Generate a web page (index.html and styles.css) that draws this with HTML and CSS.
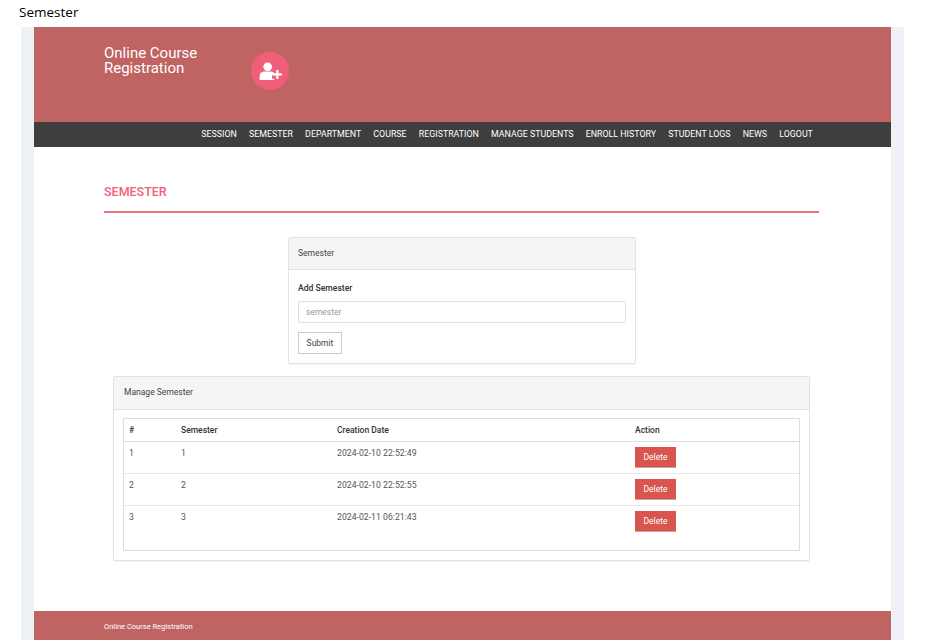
FILE: index.html
```html
<!DOCTYPE html>
<html lang="en">
<head>
<meta charset="utf-8">
<title>Semester</title>
<link rel="stylesheet" href="styles.css">
</head>
<body>
<div class="doc-title">Semester</div>
<div class="gutter">
  <div class="page">
    <header class="masthead">
      <div class="brand">Online Course<br>Registration</div>
      <div class="brand-icon">
        <svg viewBox="0 0 24 20" width="23" height="19" aria-hidden="true">
          <circle cx="9" cy="5" r="4.600" fill="#fff"/>
          <path d="M0.500 19v-3.500C0.500 12 3 10 5.500 10h7c1.600 0 2.800 .8 3.500 2v2h-2.500v3.500H16V19z" fill="#fff"/>
          <path d="M18 8.500h2.400v3.400H24v2.400h-3.600v3.400H18v-3.400h-3.500v-2.400H18z" fill="#fff"/>
        </svg>
      </div>
    </header>
    <nav class="menu">
      <a href="#">SESSION</a>
      <a href="#">SEMESTER</a>
      <a href="#">DEPARTMENT</a>
      <a href="#">COURSE</a>
      <a href="#">REGISTRATION</a>
      <a href="#">MANAGE STUDENTS</a>
      <a href="#">ENROLL HISTORY</a>
      <a href="#">STUDENT LOGS</a>
      <a href="#">NEWS</a>
      <a href="#">LOGOUT</a>
    </nav>
    <main class="content">
      <h1 class="page-title">SEMESTER</h1>
      <section class="panel panel-form">
        <div class="panel-head">Semester</div>
        <form class="panel-body form-body">
          <label class="field-label" for="semester">Add Semester</label>
          <input class="field-input" id="semester" type="text" placeholder="semester">
          <button class="btn-submit" type="button">Submit</button>
        </form>
      </section>
      <section class="panel panel-table">
        <div class="panel-head">Manage Semester</div>
        <div class="panel-body table-body">
          <div class="table-wrap">
            <table class="grid">
              <thead>
                <tr><th class="col-num">#</th><th class="col-sem">Semester</th><th class="col-date">Creation Date</th><th>Action</th></tr>
              </thead>
              <tbody>
                <tr><td>1</td><td>1</td><td>2024-02-10 22:52:49</td><td><button class="btn-delete" type="button">Delete</button></td></tr>
                <tr><td>2</td><td>2</td><td>2024-02-10 22:52:55</td><td><button class="btn-delete" type="button">Delete</button></td></tr>
                <tr><td>3</td><td>3</td><td>2024-02-11 06:21:43</td><td><button class="btn-delete" type="button">Delete</button></td></tr>
              </tbody>
            </table>
          </div>
        </div>
      </section>
    </main>
    <footer class="foot">Online Course Registration</footer>
  </div>
</div>
</body>
</html>
```

FILE: styles.css
```css
* { box-sizing: border-box; }
html, body { margin: 0; padding: 0; height: 640px; overflow: hidden; background: #fff; }
body { font-family: Roboto, "Liberation Sans", sans-serif; color: #555; }

.doc-title {
  height: 27px;
  padding: 4px 0 0 19px;
  font: 13.500px/17px "Open Sans", "Noto Sans", sans-serif;
  color: #000;
}
.gutter {
  width: 883px;
  margin-left: 21px;
  padding: 0 13px;
  height: 613px;
  background: #eef1f5;
}
.page { width: 857px; height: 613px; background: #fff; display: flex; flex-direction: column; }

.masthead {
  height: 95px;
  flex: none;
  background: #bf6363;
  display: flex;
  align-items: flex-start;
  padding: 19px 0 0 70px;
}
.brand { width: 147px; font-size: 15px; line-height: 15px; color: #fff; }
.brand-icon {
  width: 38px;
  height: 38px;
  margin-top: 6px;
  border-radius: 50%;
  background: #ef5f7a;
  display: flex;
  align-items: center;
  justify-content: center;
}

.menu {
  height: 25px;
  flex: none;
  background: #3e3e3e;
  display: flex;
  justify-content: flex-end;
  align-items: center;
  padding-right: 72px;
}
.menu a {
  padding: 0 6.100px;
  font-size: 8.840px;
  line-height: 25px;
  color: #fff;
  text-decoration: none;
  white-space: nowrap;
}

.content { flex: 1; padding: 0 72px 0 70px; }
.page-title {
  margin: 0 0 24px;
  height: 66px;
  padding-top: 37px;
  border-bottom: 2px solid #ef6f86;
  font-size: 12.500px;
  line-height: 16px;
  font-weight: 500;
  color: #ef5f7a;
}
.panel {
  background: #fff;
  border: 1px solid #e3e3e3;
  border-radius: 2px;
  box-shadow: 0 1px 1px rgba(0, 0, 0, .05);
}
.panel-form { width: 348px; height: 127px; margin: 0 0 12px 184px; }
.panel-table { width: 697px; height: 185px; margin-left: 9px; }
.panel-head {
  height: 32px;
  padding-left: 9px;
  background: #f5f5f5;
  border-bottom: 1px solid #e3e3e3;
  font-size: 8.500px;
  line-height: 31px;
  color: #444;
}
.panel-table .panel-head { height: 33px; line-height: 31px; padding-left: 10px; }

.form-body { padding: 12px 9px 0; display: flex; flex-direction: column; align-items: flex-start; }
.field-label { font-size: 8.600px; line-height: 13px; font-weight: 500; color: #333; margin-bottom: 6px; }
.field-input {
  width: 328px;
  height: 22px;
  padding: 0 7px;
  border: 1px solid #e0e0e0;
  border-radius: 2px;
  outline: 0;
  background: #fff;
  font: 8.500px Roboto, sans-serif;
  color: #555;
}
.field-input::placeholder { color: #999; opacity: 1; }
.btn-submit {
  height: 22px;
  width: 44px;
  margin-top: 9px;
  padding: 0;
  background: #fff;
  border: 1px solid #ccc;
  font: 8.500px Roboto, sans-serif;
  color: #444;
}

.table-body { padding: 8px 9px; }
.table-wrap { height: 133px; border: 1px solid #ddd; }
.grid { width: 100%; border-collapse: collapse; table-layout: fixed; font-size: 8.700px; color: #555; }
.grid th {
  height: 22px;
  padding: 0 5px;
  text-align: left;
  font-weight: 500;
  font-size: 8.500px;
  color: #333;
  border-bottom: 1px solid #ddd;
}
.grid td {
  height: 32px;
  padding: 5px 5px 0;
  vertical-align: top;
  line-height: 12px;
  border-bottom: 1px solid #e8e8e8;
}
.grid tbody tr:last-child td { border-bottom: 0; }
.col-num { width: 52px; }
.col-sem { width: 156px; }
.col-date { width: 298px; }
.btn-delete {
  display: block;
  width: 41px;
  height: 21px;
  padding: 0;
  border: 0;
  border-bottom: 1px solid #c9a0a0;
  background: #d9534f;
  font: 8.500px Roboto, sans-serif;
  color: #fff;
}

.foot {
  height: 29px;
  flex: none;
  padding: 9.500px 0 0 70px;
  background: #bf6363;
  font-size: 7.500px;
  line-height: 12px;
  color: #fff;
}
```
